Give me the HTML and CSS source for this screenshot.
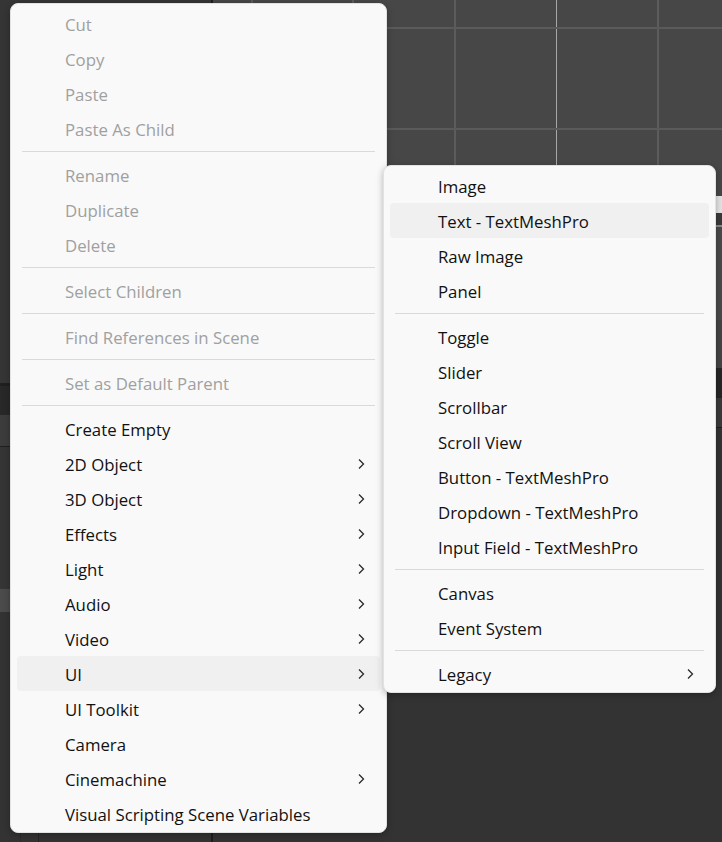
FILE: index.html
```html
<!DOCTYPE html>
<html>
<head>
<meta charset="utf-8">
<link rel="stylesheet" href="styles.css">
</head>
<body>
<div class="desk">
  <div class="hier">
    <div class="band b-top"></div>
    <div class="band b-line3"></div>
    <div class="band b-dark"></div>
    <div class="band b-mid"></div>
    <div class="band b-line1"></div>
    <div class="band b-base1"></div>
    <div class="band b-sel"></div>
    <div class="band b-base2"></div>
  </div>
  <div class="split"></div>
  <div class="scenecol">
    <div class="scene"></div>
    <div class="band s-light"></div>
    <div class="band s-tool"></div>
    <div class="band s-lline"></div>
    <div class="band s-gray1"></div>
    <div class="band s-gray2"></div>
    <div class="band s-dark"></div>
    <div class="band s-mid"></div>
    <div class="band s-line"></div>
    <div class="band s-base"></div>
  </div>
</div>

<div class="menu main-menu">
  <div class="item off">Cut</div>
  <div class="item off">Copy</div>
  <div class="item off">Paste</div>
  <div class="item off">Paste As Child</div>
  <div class="sep"></div>
  <div class="item off">Rename</div>
  <div class="item off">Duplicate</div>
  <div class="item off">Delete</div>
  <div class="sep"></div>
  <div class="item off">Select Children</div>
  <div class="sep"></div>
  <div class="item off">Find References in Scene</div>
  <div class="sep"></div>
  <div class="item off">Set as Default Parent</div>
  <div class="sep"></div>
  <div class="item">Create Empty</div>
  <div class="item"><span>2D Object</span><svg class="chev" viewBox="0 0 8 12"><path d="M2 1.5 L6.5 6 L2 10.5"/></svg></div>
  <div class="item"><span>3D Object</span><svg class="chev" viewBox="0 0 8 12"><path d="M2 1.5 L6.5 6 L2 10.5"/></svg></div>
  <div class="item"><span>Effects</span><svg class="chev" viewBox="0 0 8 12"><path d="M2 1.5 L6.5 6 L2 10.5"/></svg></div>
  <div class="item"><span>Light</span><svg class="chev" viewBox="0 0 8 12"><path d="M2 1.5 L6.5 6 L2 10.5"/></svg></div>
  <div class="item"><span>Audio</span><svg class="chev" viewBox="0 0 8 12"><path d="M2 1.5 L6.5 6 L2 10.5"/></svg></div>
  <div class="item"><span>Video</span><svg class="chev" viewBox="0 0 8 12"><path d="M2 1.5 L6.5 6 L2 10.5"/></svg></div>
  <div class="item hot"><span>UI</span><svg class="chev" viewBox="0 0 8 12"><path d="M2 1.5 L6.5 6 L2 10.5"/></svg></div>
  <div class="item"><span>UI Toolkit</span><svg class="chev" viewBox="0 0 8 12"><path d="M2 1.5 L6.5 6 L2 10.5"/></svg></div>
  <div class="item">Camera</div>
  <div class="item"><span>Cinemachine</span><svg class="chev" viewBox="0 0 8 12"><path d="M2 1.5 L6.5 6 L2 10.5"/></svg></div>
  <div class="item">Visual Scripting Scene Variables</div>
</div>

<div class="menu sub-menu">
  <div class="item">Image</div>
  <div class="item hot">Text - TextMeshPro</div>
  <div class="item">Raw Image</div>
  <div class="item">Panel</div>
  <div class="sep"></div>
  <div class="item">Toggle</div>
  <div class="item">Slider</div>
  <div class="item">Scrollbar</div>
  <div class="item">Scroll View</div>
  <div class="item">Button - TextMeshPro</div>
  <div class="item">Dropdown - TextMeshPro</div>
  <div class="item">Input Field - TextMeshPro</div>
  <div class="sep"></div>
  <div class="item">Canvas</div>
  <div class="item">Event System</div>
  <div class="sep"></div>
  <div class="item"><span>Legacy</span><svg class="chev" viewBox="0 0 8 12"><path d="M2 1.5 L6.5 6 L2 10.5"/></svg></div>
</div>
</body>
</html>
```

FILE: styles.css
```css
html, body {
  margin: 0;
  padding: 0;
}
body {
  width: 722px;
  height: 842px;
  overflow: hidden;
  background: #333333;
  font-family: "Open Sans", "Noto Sans", sans-serif;
  position: relative;
}

/* ---------- editor background ---------- */
.desk {
  display: grid;
  grid-template-columns: 211px 2px 1fr;
  height: 842px;
}
.hier, .scenecol {
  display: flex;
  flex-direction: column;
}
.band { flex: none; }
.b-top { height: 383px; background: #353535; }
.b-line3 { height: 3px; background: #1f1f1f; }
.b-dark { height: 29px; background: #282828; }
.b-mid { height: 31px; background: #3c3c3c; }
.b-line1 { height: 1px; background: #1f1f1f; }
.b-base1 { height: 142px; background: #353535; }
.b-sel { height: 23px; background: #4b4b4b; }
.b-base2 {
  flex: 1;
  background:
    linear-gradient(#2b2b2b, #2b2b2b) 20px 0 / 1px 100% no-repeat,
    linear-gradient(#242424, #242424) 38px 0 / 1px 100% no-repeat,
    #333333;
}
.split { background: #1e1e1e; }

.scene {
  height: 196px;
  background-color: #474747;
  background-image:
    linear-gradient(#5a5a5a, #5a5a5a),
    linear-gradient(#5a5a5a, #5a5a5a),
    linear-gradient(#5c5c5c, #5c5c5c),
    linear-gradient(#5c5c5c, #5c5c5c),
    linear-gradient(#5c5c5c, #5c5c5c),
    linear-gradient(#a8a8a8, #a8a8a8),
    linear-gradient(#5c5c5c, #5c5c5c);
  background-size: 100% 2px, 100% 2px, 2px 100%, 2px 100%, 2px 100%, 1px 100%, 2px 100%;
  background-position: 0 27px, 0 128px, 38px 0, 139px 0, 241px 0, 343px 0, 444px 0;
  background-repeat: no-repeat;
}
.s-light { height: 17px; background: #e4e4e4; }
.s-tool { height: 12px; background: #3a3a3a; }
.s-lline { height: 2px; background: #8a8a8a; }
.s-gray1 { height: 93px; background: #4a4a4a; }
.s-gray2 { height: 48px; background: #444444; }
.s-dark { height: 30px; background: #262626; }
.s-mid { height: 29px; background: #3a3a3a; }
.s-line { height: 1px; background: #1f1f1f; }
.s-base { flex: 1; background: #333333; }

/* ---------- context menus ---------- */
.menu {
  position: absolute;
  box-sizing: border-box;
  background: #f9f9f9;
  border: 1px solid #e2e2e2;
  border-radius: 8px;
  padding: 2px 0 1px;
  box-shadow: 0 2px 7px rgba(0, 0, 0, 0.28);
  display: flex;
  flex-direction: column;
}
.main-menu {
  left: 10px;
  top: 3px;
  width: 377px;
}
.sub-menu {
  left: 383px;
  top: 165px;
  width: 333px;
}
.item {
  box-sizing: border-box;
  height: 35px;
  margin: 0 6px;
  padding: 1px 15px 0 48px;
  border-radius: 4px;
  display: flex;
  align-items: center;
  justify-content: space-between;
  font-size: 16.8px;
  color: #111111;
  white-space: nowrap;
}
.item.off { color: #a0a0a0; }
.item.hot { background: #f0f0f0; }
.chev {
  width: 8px;
  height: 12px;
  fill: none;
  stroke: #2a2a2a;
  stroke-width: 1.3;
}
.sep {
  height: 1px;
  margin: 5px 11px;
  background: #dadada;
}
```
